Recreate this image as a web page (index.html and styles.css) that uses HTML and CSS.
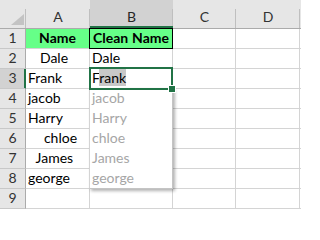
FILE: index.html
```html
<!DOCTYPE html>
<html lang="en">
<head>
<meta charset="utf-8">
<title>Clean Name</title>
<link rel="stylesheet" href="styles.css">
</head>
<body>
<div class="sheet">
  <div class="ch corner"><svg class="tri" width="13" height="11" viewBox="0 0 13 11"><polygon points="13,0 13,11 0,11" fill="#c3c3c3"/></svg></div>
  <div class="ch">A</div>
  <div class="ch selcol">B</div>
  <div class="ch">C</div>
  <div class="ch">D</div>
  <div class="ch edge"></div>

  <div class="rh">1</div>
  <div class="c hd">Name</div>
  <div class="c hd b1">Clean Name</div>
  <div class="c"></div>
  <div class="c"></div>
  <div class="c edge"></div>

  <div class="rh">2</div>
  <div class="c">   Dale</div>
  <div class="c">Dale</div>
  <div class="c"></div>
  <div class="c"></div>
  <div class="c edge"></div>

  <div class="rh selrow">3</div>
  <div class="c">Frank</div>
  <div class="c">F<span class="ac">rank</span></div>
  <div class="c"></div>
  <div class="c"></div>
  <div class="c edge"></div>

  <div class="rh">4</div>
  <div class="c">jacob</div>
  <div class="c"></div>
  <div class="c"></div>
  <div class="c"></div>
  <div class="c edge"></div>

  <div class="rh">5</div>
  <div class="c">Harry</div>
  <div class="c"></div>
  <div class="c"></div>
  <div class="c"></div>
  <div class="c edge"></div>

  <div class="rh">6</div>
  <div class="c">    chloe</div>
  <div class="c"></div>
  <div class="c"></div>
  <div class="c"></div>
  <div class="c edge"></div>

  <div class="rh">7</div>
  <div class="c">  James</div>
  <div class="c"></div>
  <div class="c"></div>
  <div class="c"></div>
  <div class="c edge"></div>

  <div class="rh">8</div>
  <div class="c">george</div>
  <div class="c"></div>
  <div class="c"></div>
  <div class="c"></div>
  <div class="c edge"></div>

  <div class="rh">9</div>
  <div class="c"></div>
  <div class="c"></div>
  <div class="c"></div>
  <div class="c"></div>
  <div class="c edge"></div>

  <div class="preview">
    <div class="pv">jacob</div>
    <div class="pv">Harry</div>
    <div class="pv">chloe</div>
    <div class="pv">James</div>
    <div class="pv">george</div>
  </div>
  <div class="selbox"></div>
  <div class="handle"></div>
</div>
</body>
</html>
```

FILE: styles.css
```css
html, body {
  margin: 0;
  padding: 0;
  background: #ffffff;
}

body {
  font-family: Lato, "Liberation Sans", sans-serif;
  font-size: 14px;
  color: #000000;
}

.sheet {
  position: relative;
  display: grid;
  grid-template-columns: 26px 64px 83px 63px 64px 1fr;
  grid-template-rows: 29px repeat(9, 20px);
  width: 301px;
  height: 209px;
  overflow: hidden;
}

.ch {
  background: linear-gradient(#bfbfbf, #bfbfbf) right bottom / 1px 19px no-repeat, #e6e6e6;
  border-bottom: 1px solid #ababab;
  padding-top: 9px;
  line-height: 15px;
  text-align: center;
  color: #333333;
  box-sizing: border-box;
}

.ch.edge {
  background: #e6e6e6;
}

.corner {
  display: flex;
  justify-content: flex-end;
  align-items: flex-end;
  padding: 0 2px 3px 0;
}

.tri {
  display: block;
}

.selcol {
  background: linear-gradient(#bfbfbf, #bfbfbf) right bottom / 1px 19px no-repeat, #d2d2d2;
  box-shadow: inset 0 -2px 0 #217346;
  color: #262626;
}

.rh {
  background: #e6e6e6;
  border-right: 1px solid #ababab;
  border-bottom: 1px solid #c8c8c8;
  text-align: center;
  line-height: 18px;
  color: #333333;
}

.selrow {
  background: #d2d2d2;
  border-right-color: #217346;
  box-shadow: inset -1px 0 0 #217346;
}

.c {
  border-right: 1px solid #d4d4d4;
  border-bottom: 1px solid #d4d4d4;
  padding: 0 2px;
  line-height: 18px;
  white-space: pre;
  word-spacing: 0.4px;
}

.c.edge {
  border-right: none;
  padding: 0;
}

.hd {
  background: #66ff88;
  font-weight: bold;
  text-align: center;
  padding: 0;
}

.b1 {
  border-right-color: #000000;
  border-bottom-color: #000000;
  box-shadow: -1px -1px 0 #000000, 0 -1px 0 #000000, -1px 0 0 #000000;
}

.ac {
  background: #c8c8c8;
}

.preview {
  position: absolute;
  left: 89px;
  top: 88px;
  width: 82px;
  height: 99px;
  border: 1px solid #c4c4c4;
  border-left-color: #d4d4d4;
  background: #ffffff;
  box-shadow: 2px 2px 3px rgba(0, 0, 0, 0.3);
  color: #a6a6a6;
  overflow: hidden;
}

.pv {
  height: 20px;
  line-height: 18px;
  padding-left: 2px;
}

.selbox {
  position: absolute;
  left: 89px;
  top: 67px;
  width: 80px;
  height: 19px;
  border: 2px solid #217346;
}

.handle {
  position: absolute;
  left: 168px;
  top: 85px;
  width: 6px;
  height: 6px;
  background: #217346;
  border: 1px solid #ffffff;
}
```
